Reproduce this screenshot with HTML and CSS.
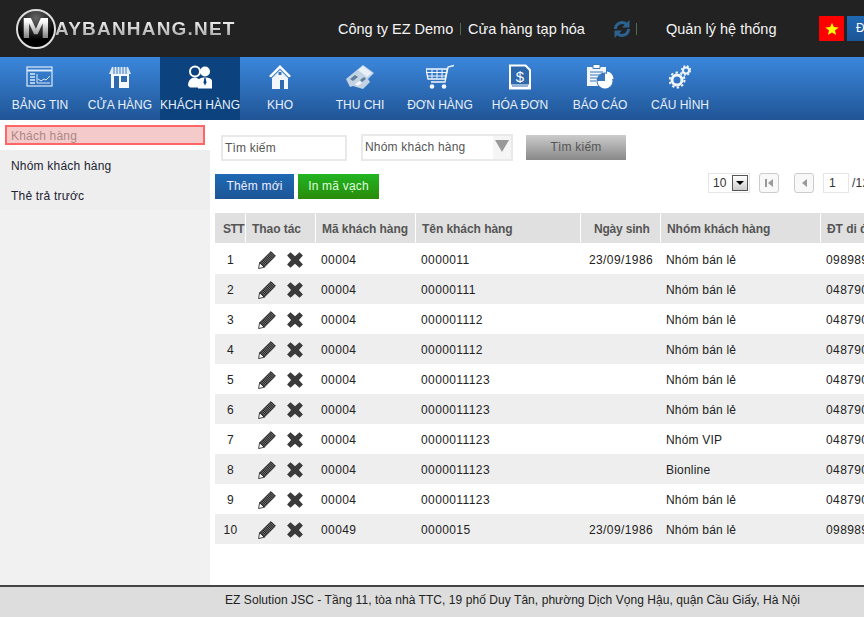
FILE: index.html
```html
<!doctype html>
<html>
<head>
<meta charset="utf-8">
<title>Khách hàng</title>
<link rel="stylesheet" href="styles.css">
</head>

<body>
<svg class="defs" width="0" height="0">
	<defs>
		<pattern id="hatch" width="1.6" height="1.6" patternUnits="userSpaceOnUse" patternTransform="rotate(45)"><rect width="1.6" height="1.6" fill="#1a1a1a"/><rect width="1.6" height="0.7" fill="#888"/></pattern>
		<symbol id="pencil" viewBox="0 0 18 18">
			<path d="M13 0.600l4.400 4.400-11.200 11.200-4.600-4.400z" fill="url(#hatch)" stroke="#111" stroke-width="0.8"/>
			<path d="M1.600 11.800l4.600 4.400-5.600 1.400z" fill="#fff" stroke="#111" stroke-width="0.8"/>
		</symbol>
		<symbol id="cross" viewBox="0 0 16 16">
			<path d="M3.500 0.200l4.500 4 4.500-4 3.400 3.400-4 4.400 4 4.400-3.400 3.400-4.500-4-4.500 4-3.400-3.400 4-4.400-4-4.400z" fill="#3a3a3a"/>
		</symbol>
	</defs>
</svg>

<div class="top">
	<div class="logo">
		<span class="logo_ring"><span class="logo_m">M</span></span><span class="logo_text">AYBANHANG.NET</span>
	</div>
	<div class="company">Công ty EZ Demo</div>
	<div class="sep"></div>
	<div class="store">Cửa hàng tạp hóa</div>
	<svg class="sync" width="18" height="20" viewBox="0 0 18 20">
		<path d="M2.500 10a6.500 6.500 0 0 1 11-4.700M15.500 10a6.500 6.500 0 0 1-11 4.700" fill="none" stroke="#2b628f" stroke-width="3"/>
		<path d="M16.500 1v7.500H9zM1.500 19v-7.500H9z" fill="#2b628f"/>
	</svg>
	<div class="sep sep2"></div>
	<div class="system">Quản lý hệ thống</div>
	<div class="flag"><svg width="14" height="14" viewBox="0 0 20 20"><path d="M10 1l2.600 6.200 6.900 0.500-5.300 4.300 1.700 6.600L10 15l-5.900 3.600 1.700-6.600L0.500 7.700l6.900-0.500z" fill="#ff0"/></svg></div>
	<div class="logout">Đăng xuất</div>
</div>

<div class="nav">
	<a class="nav_item">
		<svg width="28" height="22" viewBox="0 0 28 22" fill="none" stroke="#dce9f8"><rect x="1" y="1" width="25" height="19" stroke-width="1.2"/><path d="M1 4.500h25" stroke-width="2"/><path d="M4 8h5M4 11h5M4 14h5M4 17h5" stroke-width="1.500"/><path d="M11 8v9h13" stroke-width="1"/><path d="M12 13l3 2 3-2 2 1 4-4" stroke-width="1"/></svg>
		<span>BẢNG TIN</span>
	</a>
	<a class="nav_item">
		<svg width="22" height="22" viewBox="0 0 22 22"><path d="M3 1h16l3 7H0z" fill="#dce9f8"/><path d="M5 1v7M8 1v7M11 1v7M14 1v7M17 1v7" stroke="#3a78bd"/><path d="M2 8h18v14H2z" fill="#f5f8fc"/><path d="M5 10h5v12H5zM12 10h6v6h-6z" fill="#2f69ae"/></svg>
		<span>CỬA HÀNG</span>
	</a>
	<a class="nav_item active">
		<svg width="26" height="23" viewBox="0 0 26 23"><circle cx="8" cy="6" r="5" fill="none" stroke="#fff" stroke-width="2"/><path d="M1 20c0-5 3-8 7-8 2 0 3 1 4 2v8H3z" fill="#fff"/><circle cx="18" cy="6" r="5" fill="#fff"/><path d="M11 23v-7c0-3 3-4 7-4s7 1 7 4v7z" fill="#fff"/><path d="M17.500 12h1l1 5-1.500 3-1.500-3z" fill="#0c437f"/></svg>
		<span>KHÁCH HÀNG</span>
	</a>
	<a class="nav_item">
		<svg width="22" height="24" viewBox="0 0 22 24"><path d="M11 0l11 11-2 1.500L11 3.500 2 12.500 0 11z" fill="#fff"/><path d="M3 13l8-8 8 8v11H3z" fill="#f2f6fb"/><path d="M9.500 7h3v3h-3z" fill="#3a78bd"/><path d="M11 15h4v9h-4z" fill="#2f69ae"/></svg>
		<span>KHO</span>
	</a>
	<a class="nav_item">
		<svg width="29" height="26" viewBox="0 0 29 26"><path d="M0 15L17 1l11 8-6 6 2 3-7 7-10-3-3 1z" fill="#c3d3e4"/><path d="M12 6l5-4 9 7-5 4z" fill="#e8eff7"/><path d="M4 15l5-4 3 2-5 4zM14 16l4-3 2 2-4 3z" fill="#5f7f9f"/><path d="M9 20l4-3 3 2-4 3z" fill="#f2f6fb"/></svg>
		<span>THU CHI</span>
	</a>
	<a class="nav_item">
		<svg width="28" height="25" viewBox="0 0 28 25" fill="none" stroke="#f2f6fb"><path d="M28 1l-6 1.500-3 15H5" stroke-width="1.300"/><path d="M0 4.500h21.500l-2.500 10H2z" stroke-width="1.300"/><path d="M0.500 8h20M1.500 11.500h18.500M6 5v9M11 5v9M16 5v9" stroke-width="1"/><circle cx="6" cy="22" r="2.300" fill="#f2f6fb" stroke="none"/><circle cx="18" cy="22" r="2.300" fill="#f2f6fb" stroke="none"/></svg>
		<span>ĐƠN HÀNG</span>
	</a>
	<a class="nav_item">
		<svg width="22" height="25" viewBox="0 0 22 25"><path d="M0 0h17l5 5v20H0z" fill="#fff"/><path d="M2 2h14l4 4v14H2z" fill="#2d68ad"/><path d="M3 21.500h16" stroke="#2d68ad"/><text x="11" y="17" font-family="Liberation Sans" font-size="15" fill="#fff" text-anchor="middle">$</text></svg>
		<span>HÓA ĐƠN</span>
	</a>
	<a class="nav_item">
		<svg width="27" height="26" viewBox="0 0 27 26"><path d="M0 3h19v19H0z" fill="#f2f6fb"/><path d="M6 0.500h7v4H6z" fill="#fff" stroke="#3a78bd"/><path d="M3 8h13M3 11h10M3 14h7M3 17h6" stroke="#3a78bd"/><circle cx="18" cy="17" r="8.500" fill="#3a78bd"/><path d="M18 17V9.500a7.500 7.500 0 1 1-7.500 7.500z" fill="#fff"/><path d="M20 15V7.500a7.500 7.500 0 0 1 6.500 7.500z" fill="#fff"/></svg>
		<span>BÁO CÁO</span>
	</a>
	<a class="nav_item">
		<svg width="22" height="24" viewBox="0 0 22 24" fill="none" stroke="#f2f6fb"><circle cx="8" cy="15" r="5" stroke-width="3"/><circle cx="8" cy="15" r="7.500" stroke-width="2" stroke-dasharray="2.400 2.400"/><circle cx="17" cy="5.500" r="3" stroke-width="2"/><circle cx="17" cy="5.500" r="4.500" stroke-width="1.500" stroke-dasharray="1.800 1.800"/></svg>
		<span>CẤU HÌNH</span>
	</a>
</div>

<div class="main">
	<div class="side">
		<div class="side_first"><div class="side_on">Khách hàng</div></div>
		<div class="side_item">Nhóm khách hàng</div>
		<div class="side_item">Thẻ trả trước</div>
	</div>
	<div class="content">
		<div class="search_row">
			<div class="field search_input">Tìm kiếm</div>
			<div class="field search_group">Nhóm khách hàng<span class="group_arrow"><i></i></span></div>
			<div class="btn btn_search">Tìm kiếm</div>
		</div>
		<div class="tool_row">
			<div class="btn btn_add">Thêm mới</div>
			<div class="btn btn_print">In mã vạch</div>
			<div class="pager">
				<div class="page_size">10<span class="size_arrow"><i></i></span></div>
				<div class="page_btn btn_first"><b></b><i></i></div>
				<div class="page_btn btn_prev"><i></i></div>
				<div class="page_input">1</div>
				<div class="page_total">/12</div>
			</div>
		</div>
		<table class="list">
			<colgroup>
				<col class="c_stt"><col class="c_act"><col class="c_code"><col class="c_name"><col class="c_date"><col class="c_group"><col class="c_phone">
			</colgroup>
			<thead>
				<tr><th class="th_stt">STT</th><th>Thao tác</th><th>Mã khách hàng</th><th>Tên khách hàng</th><th class="th_date">Ngày sinh</th><th>Nhóm khách hàng</th><th>ĐT di động</th></tr>
			</thead>
			<tbody>
				<tr><td class="center num">1</td><td class="act"><svg class="i_pen"><use href="#pencil"/></svg><svg class="i_x"><use href="#cross"/></svg></td><td class="num">00004</td><td class="num">0000011</td><td class="center num">23/09/1986</td><td>Nhóm bán lẻ</td><td class="num">0989898989</td></tr>
				<tr><td class="center num">2</td><td class="act"><svg class="i_pen"><use href="#pencil"/></svg><svg class="i_x"><use href="#cross"/></svg></td><td class="num">00004</td><td class="num">00000111</td><td></td><td>Nhóm bán lẻ</td><td class="num">0487900000</td></tr>
				<tr><td class="center num">3</td><td class="act"><svg class="i_pen"><use href="#pencil"/></svg><svg class="i_x"><use href="#cross"/></svg></td><td class="num">00004</td><td class="num">000001112</td><td></td><td>Nhóm bán lẻ</td><td class="num">0487900000</td></tr>
				<tr><td class="center num">4</td><td class="act"><svg class="i_pen"><use href="#pencil"/></svg><svg class="i_x"><use href="#cross"/></svg></td><td class="num">00004</td><td class="num">000001112</td><td></td><td>Nhóm bán lẻ</td><td class="num">0487900000</td></tr>
				<tr><td class="center num">5</td><td class="act"><svg class="i_pen"><use href="#pencil"/></svg><svg class="i_x"><use href="#cross"/></svg></td><td class="num">00004</td><td class="num">0000011123</td><td></td><td>Nhóm bán lẻ</td><td class="num">0487900000</td></tr>
				<tr><td class="center num">6</td><td class="act"><svg class="i_pen"><use href="#pencil"/></svg><svg class="i_x"><use href="#cross"/></svg></td><td class="num">00004</td><td class="num">0000011123</td><td></td><td>Nhóm bán lẻ</td><td class="num">0487900000</td></tr>
				<tr><td class="center num">7</td><td class="act"><svg class="i_pen"><use href="#pencil"/></svg><svg class="i_x"><use href="#cross"/></svg></td><td class="num">00004</td><td class="num">0000011123</td><td></td><td>Nhóm VIP</td><td class="num">0487900000</td></tr>
				<tr><td class="center num">8</td><td class="act"><svg class="i_pen"><use href="#pencil"/></svg><svg class="i_x"><use href="#cross"/></svg></td><td class="num">00004</td><td class="num">0000011123</td><td></td><td>Bionline</td><td class="num">0487900000</td></tr>
				<tr><td class="center num">9</td><td class="act"><svg class="i_pen"><use href="#pencil"/></svg><svg class="i_x"><use href="#cross"/></svg></td><td class="num">00004</td><td class="num">0000011123</td><td></td><td>Nhóm bán lẻ</td><td class="num">0487900000</td></tr>
				<tr><td class="center num">10</td><td class="act"><svg class="i_pen"><use href="#pencil"/></svg><svg class="i_x"><use href="#cross"/></svg></td><td class="num">00049</td><td class="num">0000015</td><td class="center num">23/09/1986</td><td>Nhóm bán lẻ</td><td class="num">0989898989</td></tr>
			</tbody>
		</table>
	</div>
</div>

<div class="foot">EZ Solution JSC - Tầng 11, tòa nhà TTC, 19 phố Duy Tân, phường Dịch Vọng Hậu, quận Cầu Giấy, Hà Nội</div>
</body>
</html>
```

FILE: styles.css
```css
html, body {margin: 0; padding: 0; height: 100%; overflow: hidden;}
body {display: flex; flex-direction: column; font-family: "Liberation Sans", Arial, sans-serif; font-size: 12px; letter-spacing: .2px; color: #111; background: #fff;}
.defs {position: absolute;}

.top {flex: none; display: flex; align-items: center; height: 57px; background: #222; color: #f4f4f4; font-size: 14px; white-space: nowrap; overflow: hidden;}
.top > * {flex: none;}
.logo {display: flex; align-items: center; width: 338px; padding: 0 0 0 16px; box-sizing: border-box;}
.logo_ring {display: flex; align-items: center; justify-content: center; width: 40px; height: 40px; box-sizing: border-box; border: 2px solid #ddd; border-radius: 50%; background: radial-gradient(circle at 50% 20%, #666, #000 65%);}
.logo_m {font-family: "DejaVu Sans", sans-serif; font-size: 26px; font-weight: bold; letter-spacing: 0; line-height: 1; color: transparent; background: linear-gradient(#fff 20%, #888 80%); -webkit-background-clip: text; background-clip: text; transform: scaleX(1.15);}
.logo_text {margin-left: -1px; font-size: 19px; font-weight: bold; letter-spacing: 1.2px; color: transparent; background: linear-gradient(#fff, #999); -webkit-background-clip: text; background-clip: text;}
.company {width: 116px; font-size: 14.5px; letter-spacing: 0;}
.sep {width: 1px; height: 12px; margin: 0 7px 0 6px; background: #4d6b4d;}
.store {width: 117px; font-size: 14.5px; letter-spacing: 0;}
.sync {margin-left: 28px;}
.sep2 {margin: 0 29px 0 5px;}
.system {width: 110px; font-size: 14.5px; letter-spacing: 0;}
.flag {display: flex; align-items: center; justify-content: center; width: 25px; height: 25px; margin-left: 43px; background: #f00;}
.logout {width: 70px; height: 25px; margin-left: 3px; padding-left: 9px; box-sizing: border-box; line-height: 25px; font-size: 12px; color: #fff; background: linear-gradient(#1f69b4, #1c5596);}

.nav {flex: none; display: flex; height: 63px; background: linear-gradient(#3b87dc, #205596);}
.nav_item {display: flex; flex-direction: column; align-items: center; width: 80px; height: 63px; padding-top: 7px; box-sizing: border-box; color: #e8f0fa; white-space: nowrap; letter-spacing: 0;}
.nav_item svg {flex: none; height: 26px;}
.nav_item span {margin-top: 8px; line-height: 14px;}
.nav_item.active {background: #0c437f;}

.main {flex: 1; display: flex; min-height: 0;}
.side {flex: none; width: 210px; background: #f1f1f1;}
.side_first {height: 30px; padding: 5px 5px 0; box-sizing: border-box; background: #fff;}
.side_on {height: 20px; padding-left: 4px; border: 2px solid #f66; box-sizing: border-box; line-height: 18px; color: #a88; background: #f5caca;}
.side_item {height: 30px; padding-left: 11px; line-height: 32px; background: #eee; color: #223;}

.content {flex: 1; min-width: 0; padding: 14px 0 0 5px;}
.search_row {display: flex; align-items: center; height: 27px; padding-left: 6px;}
.search_row > * {flex: none;}
.field {height: 26px; border: 2px solid #e9e9e9; box-sizing: border-box; padding-left: 2px; line-height: 22px; color: #555;}
.search_input {width: 126px;}
.search_group {position: relative; width: 152px; margin-left: 14px; height: 27px;}
.group_arrow {position: absolute; top: 0; right: 0; width: 18px; height: 23px; background: #f5f5f5;}
.group_arrow i {display: block; width: 0; margin: 4px 0 0 2px; border: 7px solid transparent; border-top: 12px solid #999; border-bottom: 0;}
.btn {height: 25px; line-height: 25px; text-align: center;}
.btn_search {width: 100px; margin-left: 13px; color: #555; background: linear-gradient(#ccc, #888);}

.tool_row {display: flex; align-items: flex-start; height: 39px; margin-top: 13px;}
.tool_row > * {flex: none;}
.btn_add {width: 79px; color: #eef; background: linear-gradient(#1f69b4, #1d5596);}
.btn_print {width: 81px; margin-left: 4px; color: #dfd; background: linear-gradient(#22b522, #2a8a0a);}
.pager {display: flex; align-items: center; height: 20px; margin: -1px 0 0 329px; white-space: nowrap;}
.pager > * {flex: none;}
.page_size {display: flex; justify-content: space-between; align-items: center; width: 42px; height: 20px; padding-left: 4px; border: 1px solid #e6e6e6; box-sizing: border-box; color: #333;}
.size_arrow {display: flex; align-items: center; justify-content: center; width: 16px; height: 16px; margin-right: 1px; border: 1px solid #555; box-sizing: border-box; background: linear-gradient(#fff, #ccc);}
.size_arrow i {width: 0; border: 4px solid transparent; border-top: 4px solid #000; border-bottom: 0;}
.page_btn {display: flex; align-items: center; justify-content: center; width: 20px; height: 20px; border: 1px solid #ccc; border-radius: 3px; box-sizing: border-box; background: #f8f8f8;}
.page_btn i {width: 0; border: 4px solid transparent; border-right: 5px solid #999; border-left: 0;}
.page_btn b {width: 2px; height: 8px; margin-right: 1px; background: #999;}
.btn_first {margin-left: 9px;}
.btn_prev {margin-left: 15px;}
.page_input {width: 26px; height: 20px; margin-left: 9px; padding-left: 5px; border: 1px solid #e6e6e6; box-sizing: border-box; line-height: 18px; color: #333;}
.page_total {margin-left: 3px; color: #333;}

.list {table-layout: fixed; width: 720px; border-collapse: separate; border-spacing: 0;}
.c_stt {width: 31px;}
.c_act {width: 70px;}
.c_code {width: 100px;}
.c_name {width: 165px;}
.c_date {width: 80px;}
.c_group {width: 160px;}
.c_phone {width: 114px;}
.list th {height: 31px; padding: 1px 0 0 6px; box-sizing: border-box; border-right: 1px solid #fff; border-bottom: 1px solid #fff; background: #e0e0e0; color: #555; font-size: 12px; text-align: left; white-space: nowrap; overflow: hidden; letter-spacing: -.05px;}
.list .th_stt {padding-left: 8px; letter-spacing: -.5px;}
.list .th_date {padding-left: 13px; letter-spacing: -.2px;}
.list td {height: 30px; padding: 1px 0 0 5px; box-sizing: border-box; white-space: nowrap; overflow: hidden; color: #222;}
.list td.num {letter-spacing: .4px;}
.list tbody tr:nth-child(even) td {background: #eee;}
.list td.center {padding: 1px 0 0; text-align: center;}
.list td.act {padding: 1px 0 0 12px; font-size: 0;}
.i_pen {width: 18px; height: 18px;}
.i_x {width: 16px; height: 16px; margin: 1px 0 1px 11px;}

.foot {flex: none; height: 32px; border-top: 2px solid #444; box-sizing: border-box; background: #ddd; line-height: 27px; padding-left: 225px; color: #222; white-space: nowrap; letter-spacing: .06px;}
```
